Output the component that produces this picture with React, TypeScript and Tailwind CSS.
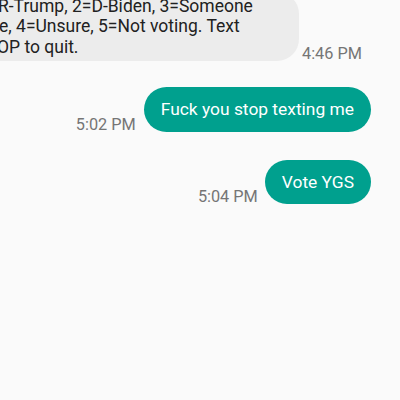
import React from "react";

export default function App() {
  return (
    <div
      className="w-[400px] h-[400px] overflow-hidden bg-[#fafafa] text-[16px]"
      style={{ fontFamily: "Roboto, 'Noto Sans', sans-serif" }}
    >
      <div className="flex items-end mt-[-8px]">
        <div className="w-[299px] shrink-0 bg-[#ececec] rounded-br-[22px] rounded-tr-[22px] pt-[4px] pb-[4px] text-[#212121] leading-[20.3px] text-[17.5px] whitespace-nowrap overflow-hidden">
          <div className="ml-[-2px]">R-Trump, 2=D-Biden, 3=Someone</div>
          <div className="ml-[-1px]">e, 4=Unsure, 5=Not voting. Text</div>
          <div className="ml-[-3px]">OP to quit.</div>
        </div>
        <div className="ml-[3px] mb-[-3px] text-[16.3px] leading-[20px] text-[#757575]">4:46 PM</div>
      </div>

      <div className="flex justify-end items-end pr-[29px] mt-[26px]">
        <div className="text-[16.3px] leading-[20px] text-[#757575] mr-[8px] mb-[-3px]">5:02 PM</div>
        <div className="h-[45px] flex items-center px-[17px] rounded-full bg-[#00a08e] text-white text-[17.4px]">
          Fuck you stop texting me
        </div>
      </div>

      <div className="flex justify-end items-end pr-[29px] mt-[28px]">
        <div className="text-[16.3px] leading-[20px] text-[#757575] mr-[7px] mb-[-3px]">5:04 PM</div>
        <div className="h-[44px] flex items-center px-[17px] rounded-full bg-[#00a08e] text-white text-[17.4px]">
          Vote YGS
        </div>
      </div>
    </div>
  );
}
